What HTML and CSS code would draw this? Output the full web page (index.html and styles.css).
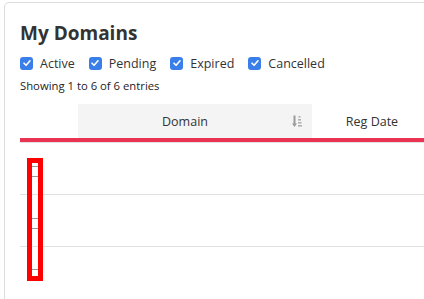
FILE: index.html
```html
<!DOCTYPE html>
<html>
<head>
<meta charset="utf-8">
<link rel="stylesheet" href="styles.css">
</head>
<body>
<div class="card">
  <h1 class="title">My Domains</h1>
  <div class="filters">
    <label class="filter"><span class="cb"><svg viewBox="0 0 12 12" width="12" height="12"><path d="M3 6.2 L5.1 8.3 L9 3.8" fill="none" stroke="#fff" stroke-width="1.6" stroke-linecap="round" stroke-linejoin="round"/></svg></span>Active</label>
    <label class="filter"><span class="cb"><svg viewBox="0 0 12 12" width="12" height="12"><path d="M3 6.2 L5.1 8.3 L9 3.8" fill="none" stroke="#fff" stroke-width="1.6" stroke-linecap="round" stroke-linejoin="round"/></svg></span>Pending</label>
    <label class="filter"><span class="cb"><svg viewBox="0 0 12 12" width="12" height="12"><path d="M3 6.2 L5.1 8.3 L9 3.8" fill="none" stroke="#fff" stroke-width="1.6" stroke-linecap="round" stroke-linejoin="round"/></svg></span>Expired</label>
    <label class="filter"><span class="cb"><svg viewBox="0 0 12 12" width="12" height="12"><path d="M3 6.2 L5.1 8.3 L9 3.8" fill="none" stroke="#fff" stroke-width="1.6" stroke-linecap="round" stroke-linejoin="round"/></svg></span>Cancelled</label>
  </div>
  <div class="info">Showing 1 to 6 of 6 entries</div>
  <div class="table">
    <div class="thead">
      <div class="th th-check"></div>
      <div class="th th-sorted"><span class="th-label">Domain</span>
        <svg class="sort" viewBox="0 0 10 14" width="10" height="14"><path d="M2.5 1.5 V11" stroke="#9a9a9a" stroke-width="2"/><path d="M0 9.5 L2.5 13 L5 9.5 Z" fill="#9a9a9a"/><rect x="6.5" y="2" width="2" height="1.6" fill="#b0b0b0"/><rect x="6" y="5" width="3" height="1.6" fill="#b0b0b0"/><rect x="6" y="8" width="3.5" height="1.6" fill="#b0b0b0"/><rect x="6" y="11" width="4" height="1.6" fill="#b0b0b0"/></svg>
      </div>
      <div class="th">Reg Date</div>
    </div>
    <div class="row"></div>
    <div class="row"></div>
    <div class="row"></div>
    <div class="highlight">
      <span class="tick t1"></span>
      <span class="tick t2"></span>
      <span class="tick t3"></span>
      <span class="tick t4"></span>
      <span class="tick t5"></span>
    </div>
  </div>
</div>
</body>
</html>
```
FILE: styles.css
```css
html, body {
  margin: 0;
  padding: 0;
  background: #fff;
  overflow: hidden;
  font-family: "Open Sans", "Liberation Sans", sans-serif;
  color: #333;
}
.card {
  margin: 2px 0 0 4px;
  width: 640px;
  height: 400px;
  border: 1px solid #dcdcdc;
  border-radius: 5px;
  padding: 0 0 0 15px;
  box-sizing: border-box;
}
.title {
  margin: 17px 0 0 0;
  font-size: 19px;
  font-weight: 700;
  line-height: 26px;
  color: #333;
}
.filters {
  display: flex;
  gap: 14px;
  margin-top: 7px;
  height: 20px;
  align-items: center;
}
.filter {
  display: flex;
  align-items: center;
  font-size: 12.5px;
  color: #333;
}
.cb {
  width: 13px;
  height: 13px;
  border-radius: 3px;
  background: #3a7fe9;
  display: inline-flex;
  align-items: center;
  justify-content: center;
  margin-right: 7px;
}
.info {
  margin-top: 5px;
  font-size: 11.3px;
  line-height: 16px;
  color: #222;
}
.table {
  position: relative;
  margin-top: 10px;
}
.thead {
  display: grid;
  grid-template-columns: 58px 234px 120px 1fr;
  height: 34px;
  border-bottom: 4px solid #ea3352;
}
.th {
  display: flex;
  align-items: center;
  justify-content: center;
  font-size: 12.5px;
  color: #333;
}
.th-check {
  background: #fff;
}
.th-sorted {
  background: #f4f4f4;
  padding-right: 10px;
  justify-content: flex-start;
}
.th-label {
  flex: 1;
  text-align: center;
}
.sort {
  display: block;
}
.row {
  height: 51px;
  border-top: 1px solid #e2e2e2;
}
.row:last-of-type {
  border-bottom: 1px solid #e2e2e2;
}
.highlight {
  position: absolute;
  left: 7px;
  top: 54px;
  width: 16px;
  height: 123px;
  border: 5px solid #ff0000;
  box-sizing: border-box;
}
.tick {
  position: absolute;
  left: 0;
  width: 6px;
  height: 1px;
  background: #999;
}
.t1 { top: 3px; }
.t2 { top: 13px; }
.t3 { top: 55px; }
.t4 { top: 65px; }
.t5 { top: 106px; }
```
